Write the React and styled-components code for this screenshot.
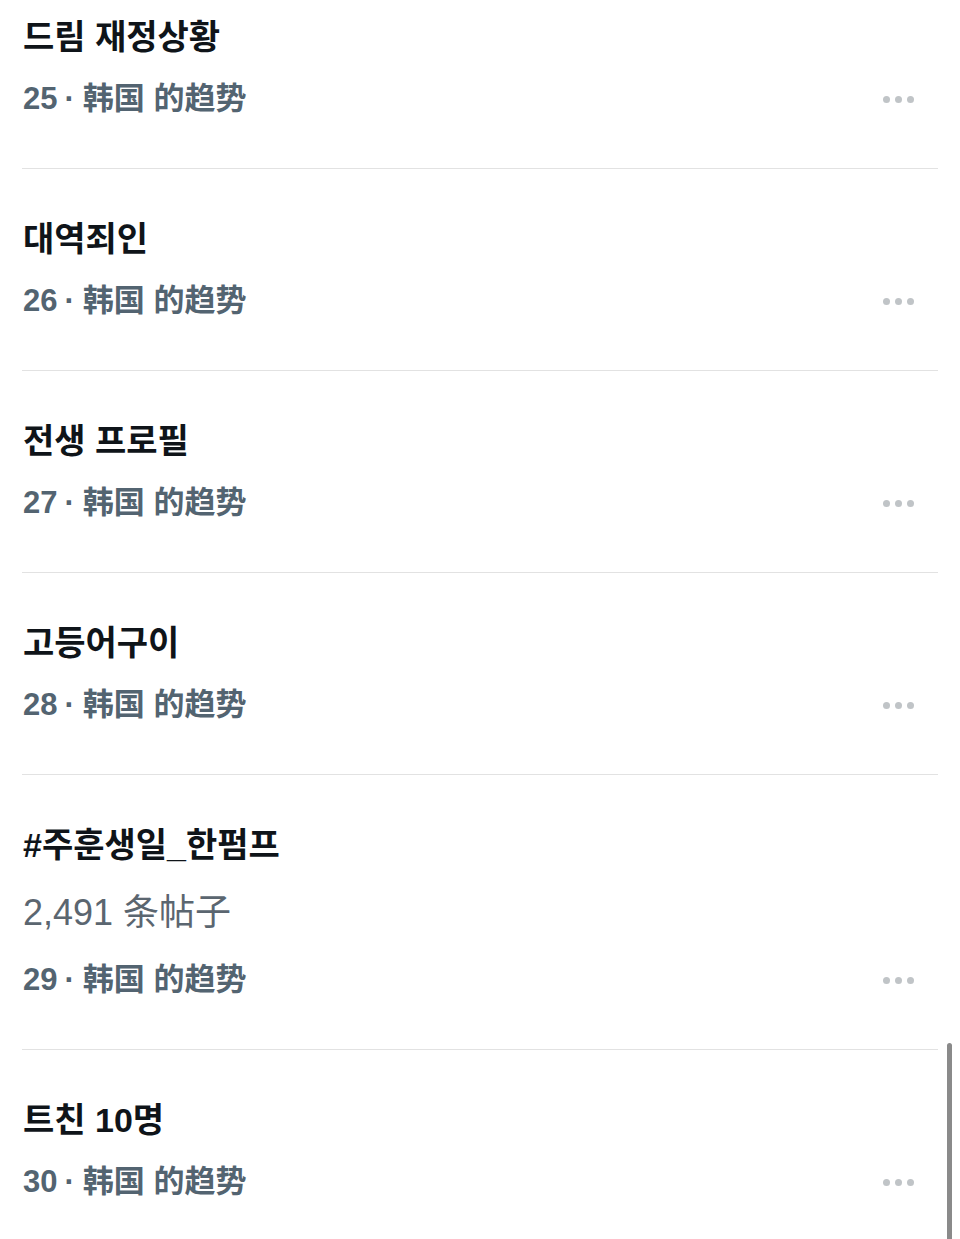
import React from "react";
import styled, { createGlobalStyle } from "styled-components";

const GlobalStyle = createGlobalStyle`
  html, body {
    margin: 0;
    padding: 0;
    background: #ffffff;
    overflow: hidden;
  }
`;

const Page = styled.div`
  position: relative;
  width: 960px;
  height: 1239px;
  overflow: hidden;
  background: #ffffff;
`;

const List = styled.div`
  display: flex;
  flex-direction: column;
  padding: 0 22px;
  width: 916px;
`;

const Item = styled.div`
  display: flex;
  align-items: flex-end;
  justify-content: space-between;
  padding: ${({ $first }) => ($first ? "17px" : "50px")} 0 49px 1px;
  border-top: ${({ $first }) => ($first ? "none" : "1px solid #e2e2e2")};
`;

const Texts = styled.div`
  display: flex;
  flex-direction: column;
  gap: 22px;
`;

const Title = styled.div`
  font-family: "Liberation Sans", "Noto Sans CJK KR", sans-serif;
  font-weight: 700;
  font-size: 34px;
  line-height: 40px;
  color: #0f1419;
`;

const Posts = styled.div`
  font-family: "Liberation Sans", "Noto Sans CJK SC", sans-serif;
  font-weight: 400;
  font-size: 36px;
  line-height: 40px;
  color: #5b6670;
  margin: 6px 0 5px;
`;

const Meta = styled.div`
  font-family: "Liberation Sans", "Noto Sans CJK SC", sans-serif;
  font-weight: 700;
  font-size: 31px;
  line-height: 40px;
  color: #536471;
`;

const Dot = styled.span`
  margin: 0 8px 0 7px;
`;

const More = styled.div`
  display: flex;
  gap: 5px;
  height: 40px;
  align-items: center;
  margin-right: 24px;
`;

const Circle = styled.span`
  width: 7px;
  height: 7px;
  border-radius: 50%;
  background: #c0c4c7;
`;

const Scrollbar = styled.div`
  position: absolute;
  right: 8px;
  top: 1043px;
  width: 5px;
  height: 210px;
  border-radius: 3px;
  background: #8a8a8a;
`;

const trends = [
  { rank: 25, title: "드림 재정상황" },
  { rank: 26, title: "대역죄인" },
  { rank: 27, title: "전생 프로필" },
  { rank: 28, title: "고등어구이" },
  { rank: 29, title: "#주훈생일_한펌프", posts: "2,491 条帖子" },
  { rank: 30, title: "트친 10명" },
];

const App = () => (
  <Page>
    <GlobalStyle />
    <List>
      {trends.map((t, i) => (
        <Item key={t.rank} $first={i === 0}>
          <Texts>
            <Title>{t.title}</Title>
            {t.posts && <Posts>{t.posts}</Posts>}
            <Meta>
              {t.rank}
              <Dot>·</Dot>韩国 的趋势
            </Meta>
          </Texts>
          <More>
            <Circle />
            <Circle />
            <Circle />
          </More>
        </Item>
      ))}
    </List>
    <Scrollbar />
  </Page>
);

export default App;
